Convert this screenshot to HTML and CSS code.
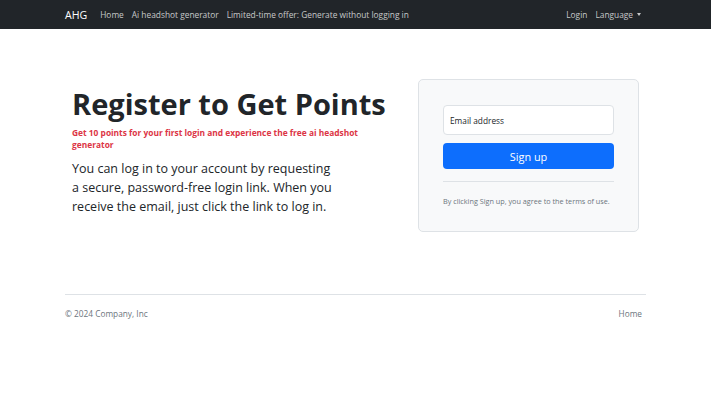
FILE: index.html
```html
<html>
<head>
    <title>Register to Get Points</title>
    <meta name="viewport" content="width=device-width, initial-scale=1" />
    <link rel="stylesheet" href="styles.css">
</head>
<body>
    <nav class="navbar">
        <div class="container nav-inner">
            <div class="nav-left">
                <a class="brand" href="#">AHG</a>
                <a href="#">Home</a>
                <a href="#">Ai headshot generator</a>
                <a href="#">Limited-time offer: Generate without logging in</a>
            </div>
            <div class="nav-right">
                <a href="#">Login</a>
                <a href="#" class="dropdown">Language</a>
            </div>
        </div>
    </nav>

    <main class="container hero">
        <div class="hero-text">
            <h1>Register to Get Points</h1>
            <p class="promo">Get 10 points for your first login and experience the free ai headshot generator</p>
            <p class="lead">You can log in to your account by requesting a secure, password-free login link. When you receive the email, just click the link to log in.</p>
        </div>
        <form class="signup-card">
            <input type="email" placeholder="Email address">
            <button type="button">Sign up</button>
            <hr>
            <small>By clicking Sign up, you agree to the terms of use.</small>
        </form>
    </main>

    <footer class="container footer">
        <span>&copy; 2024 Company, Inc</span>
        <a href="#">Home</a>
    </footer>
</body>
</html>
```

FILE: styles.css
```css
body {
    margin: 0;
    font-family: "Open Sans", sans-serif;
    color: #212529;
    background: #fff;
}

a {
    text-decoration: none;
}

.container {
    width: 581px;
    margin: 0 auto;
    box-sizing: border-box;
}

.navbar {
    background: #212529;
    height: 29px;
}

.nav-inner {
    height: 100%;
    display: flex;
    align-items: center;
    justify-content: space-between;
}

.nav-left, .nav-right {
    display: flex;
    align-items: center;
    gap: 8px;
}

.navbar a {
    color: rgba(255, 255, 255, 0.75);
    font-size: 8.35px;
}

.navbar .brand {
    color: #fff;
    font-size: 10.6px;
    margin-right: 5px;
}

.dropdown::after {
    content: "";
    display: inline-block;
    margin-left: 4px;
    vertical-align: 2px;
    border-top: 3px solid;
    border-left: 2.5px solid transparent;
    border-right: 2.5px solid transparent;
}

.nav-right {
    margin-right: 5px;
}

.hero {
    display: flex;
    justify-content: space-between;
    align-items: flex-start;
    padding: 50px 0 0 7px;
    height: 265px;
    box-sizing: border-box;
}

.hero-text {
    width: 320px;
    padding-top: 8px;
}

h1 {
    margin: 0;
    font-size: 29px;
    font-weight: 700;
    line-height: 1.2;
    white-space: nowrap;
}

.promo {
    margin: 5px 0 0;
    color: #dc3545;
    font-size: 8.4px;
    font-weight: 700;
    line-height: 12.5px;
}

.lead {
    margin: 7px 0 0;
    width: 264px;
    font-size: 12.5px;
    line-height: 19px;
}

.signup-card {
    width: 221px;
    margin: 0 7px 0 0;
    padding: 24px 24px 23px;
    box-sizing: border-box;
    background: #f8f9fa;
    border: 1px solid #dee2e6;
    border-radius: 5px;
    display: flex;
    flex-direction: column;
}

.signup-card input {
    height: 30px;
    margin-top: 1px;
    padding: 0 6px;
    border: 1px solid #dee2e6;
    border-radius: 4px;
    font-family: inherit;
    font-size: 8.3px;
    background: #fff;
}

.signup-card input::placeholder {
    color: #212529;
}

.signup-card button {
    margin-top: 8px;
    height: 26px;
    border: 0;
    border-radius: 4px;
    background: #0d6efd;
    color: #fff;
    font-family: inherit;
    font-size: 10.9px;
}

.signup-card hr {
    margin: 12px 0 12px;
    border: 0;
    border-top: 1px solid #dee2e6;
    width: 100%;
}

.signup-card small {
    color: #6c757d;
    font-size: 7.25px;
    line-height: 14px;
}

.footer {
    border-top: 1px solid #dee2e6;
    display: flex;
    justify-content: space-between;
    padding: 13px 4px 0 0;
    font-size: 8.3px;
    color: #6c757d;
}

.footer a {
    color: #6c757d;
}
```
